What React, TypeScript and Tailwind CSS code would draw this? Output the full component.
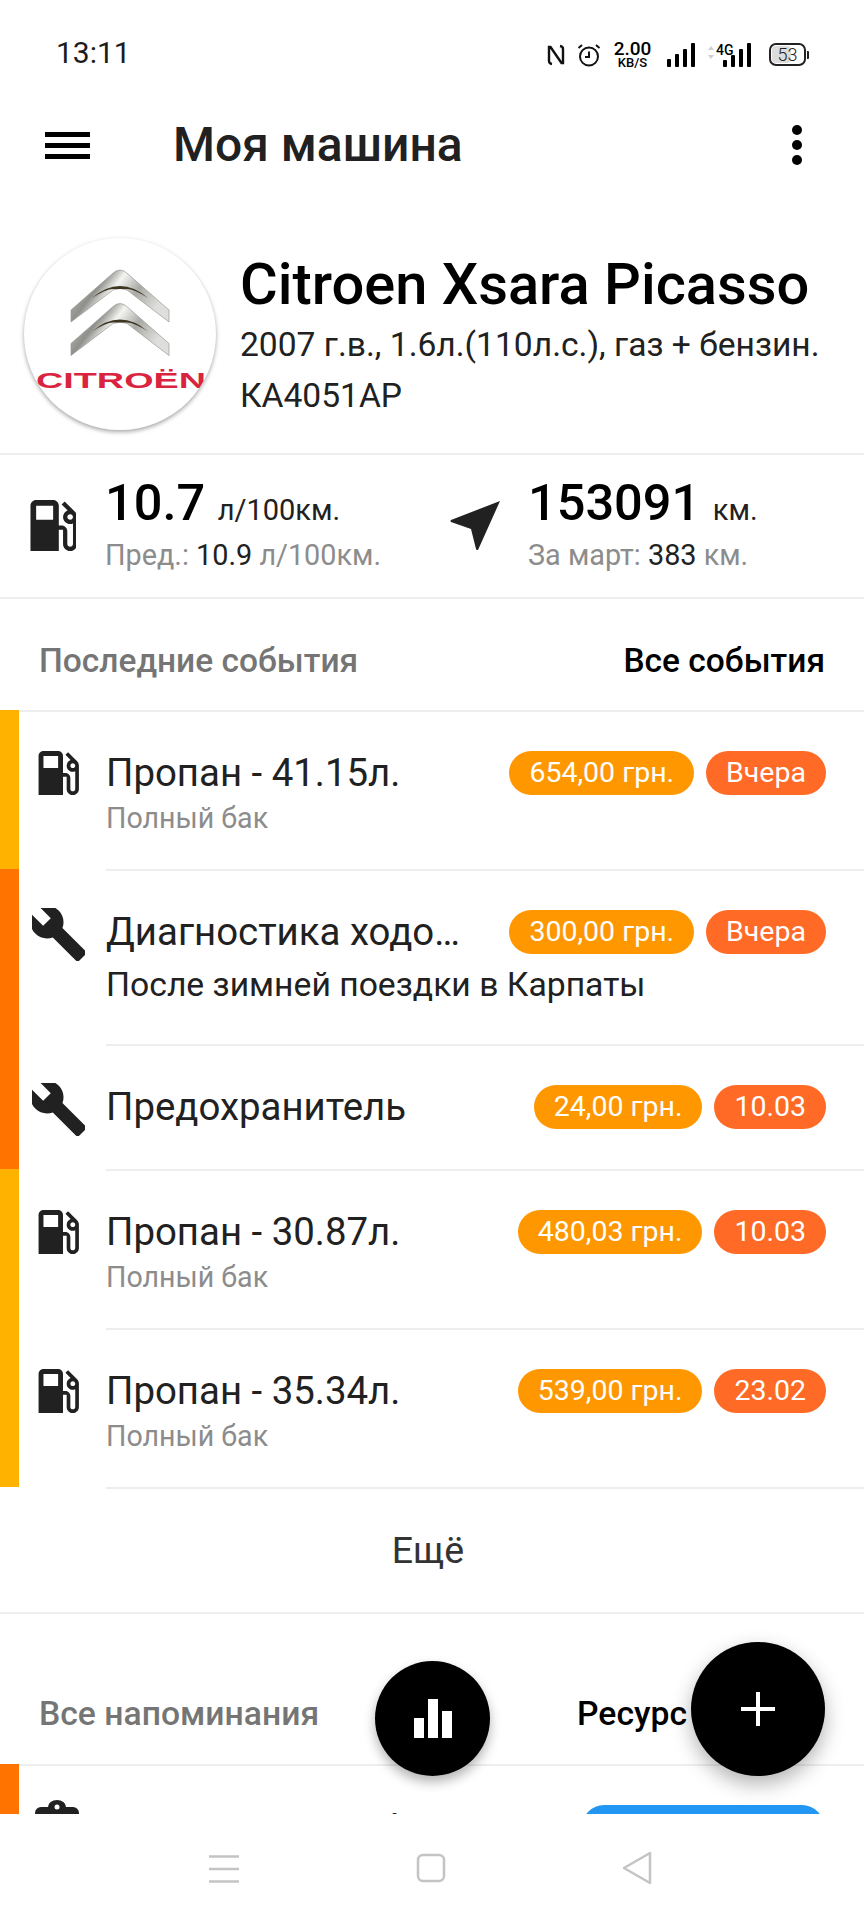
const GasIcon = ({ className }: { className: string }) => (
  <svg className={className} viewBox="3.9 3 16.1 18" fill="#212121" aria-hidden="true">
    <path d="M19.77 7.23l.01-.01-3.72-3.72L15 4.56l2.11 2.11c-.94.36-1.61 1.26-1.61 2.33 0 1.38 1.12 2.5 2.5 2.5.36 0 .69-.08 1-.21v7.21c0 .55-.45 1-1 1s-1-.45-1-1V14c0-1.1-.9-2-2-2h-1V5c0-1.1-.9-2-2-2H6c-1.1 0-2 .9-2 2v16h10v-7.5h1.5v5c0 1.38 1.12 2.5 2.5 2.5s2.5-1.12 2.5-2.5V9c0-.69-.28-1.32-.73-1.77zM12 10H6V5h6v5zm6 0c-.55 0-1-.45-1-1s.45-1 1-1 1 .45 1 1-.45 1-1 1z" />
  </svg>
)

const WrenchIcon = () => (
  <svg className="h-[53px] w-[53px]" viewBox="1.6 2 20.9 20.9" fill="#212121" aria-hidden="true">
    <path d="M22.7 19l-9.1-9.1c.9-2.3.4-5-1.5-6.9-2-2-5-2.4-7.4-1.3L9 6 6 9 1.6 4.7C.4 7.1.9 10.1 2.9 12.1c1.9 1.9 4.6 2.4 6.9 1.5l9.1 9.1c.4.4 1 .4 1.4 0l2.3-2.3c.5-.4.5-1.1.1-1.4z" />
  </svg>
)

const CitroenLogo = () => (
  <svg className="h-full w-full" viewBox="0 0 192 192" aria-hidden="true">
    <defs>
      <linearGradient id="chev" x1="0" y1="0" x2="1" y2="0.4">
        <stop offset="0" stopColor="#d4d4d2" />
        <stop offset="0.35" stopColor="#8f8f8b" />
        <stop offset="0.5" stopColor="#f4f4f2" />
        <stop offset="0.72" stopColor="#a9a9a5" />
        <stop offset="1" stopColor="#dededc" />
      </linearGradient>
    </defs>
    {[0, 33.5].map((dy) => (
      <g key={dy} transform={`translate(0 ${dy})`}>
        <path d="M96 32Q100 32 104 36L145 72V84L103 52Q96 49 89 52L47 84V72L88 36Q92 32 96 32Z" fill="url(#chev)" stroke="#9a9a96" strokeWidth="0.7" />
        <path d="M68 60Q96 36 124 60Q110 51 103 51H89Q82 51 68 60Z" fill="#3c3520" />
      </g>
    ))}
    <text x="12" y="150" fontFamily="'Liberation Sans', sans-serif" fontWeight="700" fontSize="22" fill="#d9233f" textLength="170" lengthAdjust="spacingAndGlyphs">
      CITROËN
    </text>
  </svg>
)

const StatusIcons = () => (
  <div className="flex items-center text-black">
    <svg className="h-[22px] w-[18px]" viewBox="0 0 18 22" fill="none" stroke="#111" strokeWidth="2.4" aria-hidden="true">
      <path d="M5 20Q2 19.5 2 17V3h1.5L14.5 19H16V5Q16 2.5 13 2" />
    </svg>
    <svg className="ml-[12px] h-[24px] w-[24px]" viewBox="0 0 24 24" fill="none" stroke="#111" strokeWidth="2" aria-hidden="true">
      <circle cx="12" cy="13.5" r="9" />
      <path d="M12 8.5v5.5h-4M1.5 5 5 2M22.5 5 19 2" />
    </svg>
    <div className="ml-[11px] flex w-[41px] flex-col items-center font-['Roboto'] font-medium">
      <span className="text-[19px] leading-[17px]">2.00</span>
      <span className="text-[13px] leading-[12px]">KB/S</span>
    </div>
    <div className="ml-[14px] flex h-[24px] items-end gap-[4px]">
      <i className="h-[8px] w-[4px] rounded-[1px] bg-black" />
      <i className="h-[13px] w-[4px] rounded-[1px] bg-black" />
      <i className="h-[18px] w-[4px] rounded-[1px] bg-black" />
      <i className="h-[24px] w-[4px] rounded-[1px] bg-black" />
    </div>
    <div className="relative ml-[13px] h-[24px] w-[43px]">
      <svg className="absolute left-0 top-[3px] h-[13px] w-[6px]" viewBox="0 0 6 13" fill="#cfcfcf" aria-hidden="true">
        <path d="M3 0 6 4H0ZM3 13 0 9H6Z" />
      </svg>
      <span className="absolute left-[8px] top-0 font-['Roboto'] text-[14px] font-medium leading-[15px]">4G</span>
      <div className="absolute bottom-0 right-0 flex items-end gap-[4px]">
        <i className="h-[7px] w-[4px] rounded-[1px] bg-black" />
        <i className="h-[12px] w-[4px] rounded-[1px] bg-black" />
        <i className="h-[18px] w-[4px] rounded-[1px] bg-black" />
        <i className="h-[24px] w-[4px] rounded-[1px] bg-black" />
      </div>
    </div>
    <div className="relative ml-[18px] flex h-[23px] w-[37px] items-center justify-center overflow-hidden rounded-[7px] border-2 border-[#222] font-['Roboto'] text-[18px] font-light leading-none text-[#222]">
      <i className="absolute inset-y-[1px] left-[1px] w-[19px] rounded-[4px] bg-[#dcdcdc]" />
      <span className="relative">53</span>
    </div>
    <i className="ml-[1px] h-[8px] w-[2px] rounded-r-[1px] bg-[#222]" />
  </div>
)

const Pill = ({ label, tone }: { label: string; tone: 'amber' | 'red' }) => (
  <span className={`flex h-[44px] shrink-0 items-center rounded-full px-[20px] text-[28.5px] leading-none text-white ${tone === 'amber' ? 'bg-[#ff9800]' : 'bg-[#ff6a26]'}`}>
    {label}
  </span>
)

interface RowProps {
  kind: 'gas' | 'service'
  title: string
  note?: string
  dark?: boolean
  first?: boolean
  price: string
  date: string
  height: string
}

const EventRow = ({ kind, title, note, dark, first, price, date, height }: RowProps) => (
  <div className={`flex ${height}`}>
    <div className={`w-[19px] shrink-0 ${kind === 'gas' ? 'bg-[#ffb300]' : 'bg-[#ff7300]'}`} />
    <div className={`flex w-[87px] shrink-0 justify-center pr-[9px] ${first ? 'border-t-2 border-[#eeeeee] pt-[37px]' : 'pt-[39px]'}`}>
      {kind === 'gas' ? <GasIcon className="mt-[2px] h-[44px] w-[42px]" /> : <WrenchIcon />}
    </div>
    <div className="min-w-0 flex-1 border-t-2 border-[#eeeeee] pr-[38px] pt-[39px]">
      <div className="flex items-center gap-[12px]">
        <div className="min-w-0 flex-1 whitespace-nowrap text-[38.4px] leading-[44px] text-[#212121]">{title}</div>
        <Pill label={price} tone="amber" />
        <Pill label={date} tone="red" />
      </div>
      {note && (
        <div className={`leading-[36px] ${dark ? 'mt-[13px] text-[33.7px] text-[#212121]' : 'mt-[5px] text-[28.6px] text-[#8c8c8c]'}`}>{note}</div>
      )}
    </div>
  </div>
)

export default function App() {
  return (
    <div className="relative flex h-[1920px] w-[864px] flex-col overflow-hidden bg-white font-['Roboto',sans-serif]">
      <div className="flex h-[106px] shrink-0 items-start justify-between pl-[56px] pr-[55px] pt-[41px]">
        <span className="text-[30px] leading-[24px] text-[#1c1c1c]">13:11</span>
        <div className="mt-[-1px]">
          <StatusIcons />
        </div>
      </div>

      <div className="relative flex h-[94px] shrink-0 items-center pb-[16px]">
        <div className="ml-[45px] flex w-[45px] flex-col gap-[6px]">
          <i className="h-[5px] bg-black" />
          <i className="h-[5px] bg-black" />
          <i className="h-[5px] bg-black" />
        </div>
        <h1 className="ml-[83px] text-[48px] font-medium leading-none text-[#212121]">Моя машина</h1>
        <div className="ml-auto mr-[62px] flex flex-col gap-[5px]">
          <i className="h-[10px] w-[10px] rounded-full bg-black" />
          <i className="h-[10px] w-[10px] rounded-full bg-black" />
          <i className="h-[10px] w-[10px] rounded-full bg-black" />
        </div>
      </div>

      <div className="flex h-[253px] shrink-0 items-start pl-[24px] pt-[38px]">
        <div className="h-[192px] w-[192px] shrink-0 overflow-hidden rounded-full bg-white shadow-[0_2px_4px_rgba(0,0,0,0.35)]">
          <CitroenLogo />
        </div>
        <div className="ml-[24px] pt-[8px]">
          <div className="text-[57.8px] font-medium leading-[76px] text-black">Citroen Xsara Picasso</div>
          <div className="text-[33.6px] leading-[46px] text-[#212121]">2007 г.в., 1.6л.(110л.с.), газ + бензин.</div>
          <div className="text-[33.6px] leading-[56px] text-[#212121]">КА4051АР</div>
        </div>
      </div>

      <div className="flex h-[144px] shrink-0 items-center border-t-2 border-[#eeeeee] pb-[8px]">
        <div className="flex w-[421px] items-center pl-[30px]">
          <GasIcon className="mt-[6px] h-[51px] w-[46px]" />
          <div className="ml-[29px]">
            <div className="text-[50.5px] font-medium leading-[62px] text-black">
              10.7 <span className="text-[29px] font-normal text-[#212121]">л/100км.</span>
            </div>
            <div className="mt-[-3px] text-[28.8px] leading-[34px] text-[#8c8c8c]">
              Пред.: <span className="text-[#212121]">10.9</span> л/100км.
            </div>
          </div>
        </div>
        <div className="flex items-center pl-[29px]">
          <svg className="mt-[5px] h-[50px] w-[50px]" viewBox="0 0 50 50" fill="#212121" aria-hidden="true">
            <path d="M50 1 28 50Q27 51 26 49L21 29 1 22Q0 21 1 20Z" />
          </svg>
          <div className="ml-[28px]">
            <div className="text-[50.5px] font-medium leading-[62px] text-black">
              153091 <span className="text-[29px] font-normal text-[#212121]">км.</span>
            </div>
            <div className="mt-[-3px] text-[28.8px] leading-[34px] text-[#8c8c8c]">
              За март: <span className="text-[#212121]">383</span> км.
            </div>
          </div>
        </div>
      </div>

      <div className="flex h-[113px] shrink-0 items-center justify-between border-t-2 border-[#eeeeee] pl-[39px] pr-[39px] pt-[14px] text-[33.5px] font-medium">
        <span className="text-[#757575]">Последние события</span>
        <span className="text-black">Все события</span>
      </div>

      <EventRow first kind="gas" title="Пропан - 41.15л." note="Полный бак" price="654,00 грн." date="Вчера" height="h-[159px]" />
      <EventRow kind="service" title="Диагностика ходо…" note="После зимней поездки в Карпаты" dark price="300,00 грн." date="Вчера" height="h-[175px]" />
      <EventRow kind="service" title="Предохранитель" price="24,00 грн." date="10.03" height="h-[125px]" />
      <EventRow kind="gas" title="Пропан - 30.87л." note="Полный бак" price="480,03 грн." date="10.03" height="h-[159px]" />
      <EventRow kind="gas" title="Пропан - 35.34л." note="Полный бак" price="539,00 грн." date="23.02" height="h-[159px]" />

      <div className="ml-[106px] h-[2px] shrink-0 bg-[#eeeeee]" />
      <div className="flex h-[123px] shrink-0 items-center justify-center pr-[8px] text-[37.5px] text-[#333333]">Ещё</div>

      <div className="flex h-[152px] shrink-0 items-center justify-between border-t-2 border-[#eeeeee] pl-[39px] pr-[177px] pt-[50px] text-[33.7px] font-medium">
        <span className="text-[#757575]">Все напоминания</span>
        <span className="text-black">Ресурс</span>
      </div>

      <div className="flex h-[50px] shrink-0 overflow-hidden">
        <div className="w-[19px] shrink-0 bg-[#ff7300]" />
        <div className="flex min-w-0 flex-1 border-t-2 border-[#eeeeee]">
          <div className="w-[87px] shrink-0 pl-[16px] pt-[34px]">
            <svg className="h-[50px] w-[44px]" viewBox="0 0 44 50" fill="#212121" aria-hidden="true">
              <path d="M6 7h7a9 7 0 0 1 18 0h7a6 6 0 0 1 6 6v37H0V13a6 6 0 0 1 6-6Z" />
              <circle cx="22" cy="7" r="2.5" fill="#fff" />
            </svg>
          </div>
          <div className="min-w-0 flex-1 truncate pt-[41px] text-[38.4px] leading-[44px] text-[#212121]">Замена масла, фильтра</div>
          <div className="mr-[40px] mt-[39px] h-[44px] w-[242px] shrink-0 rounded-full bg-[#2196f3]" />
        </div>
      </div>

      <div className="mt-auto flex h-[106px] shrink-0 items-start justify-center bg-white">
        <svg className="ml-[-2px] mt-[40px] h-[30px] w-[30px]" viewBox="0 0 30 30" fill="none" stroke="#c4c4c4" strokeWidth="2.5" aria-hidden="true">
          <path d="M0 2.5h30M0 15h30M0 27.5h30" />
        </svg>
        <svg className="ml-[177px] mt-[39px] h-[30px] w-[30px]" viewBox="0 0 30 30" fill="none" stroke="#c4c4c4" strokeWidth="2.5" aria-hidden="true">
          <rect x="2" y="2" width="26" height="26" rx="5" />
        </svg>
        <svg className="ml-[175px] mt-[37px] h-[34px] w-[32px]" viewBox="0 0 32 34" fill="none" stroke="#c4c4c4" strokeWidth="2.5" strokeLinejoin="round" aria-hidden="true">
          <path d="M29 2 3 17l26 15Z" />
        </svg>
      </div>

      <button type="button" className="absolute left-[375px] top-[1661px] flex h-[115px] w-[115px] items-center justify-center rounded-full bg-black shadow-[0_6px_12px_rgba(0,0,0,0.3)]">
        <svg className="h-[39px] w-[38px]" viewBox="0 0 38 39" fill="#fff" aria-hidden="true">
          <path d="M0 19h10v20H0zM14 0h10v39H14zM28 12h10v27H28z" />
        </svg>
      </button>
      <button type="button" className="absolute left-[691px] top-[1642px] flex h-[134px] w-[134px] items-center justify-center rounded-full bg-black shadow-[0_8px_20px_rgba(0,0,0,0.3)]">
        <svg className="h-[34px] w-[34px]" viewBox="0 0 34 34" fill="#fff" aria-hidden="true">
          <path d="M15 0h4v15h15v4H19v15h-4V19H0v-4h15z" />
        </svg>
      </button>
    </div>
  )
}
